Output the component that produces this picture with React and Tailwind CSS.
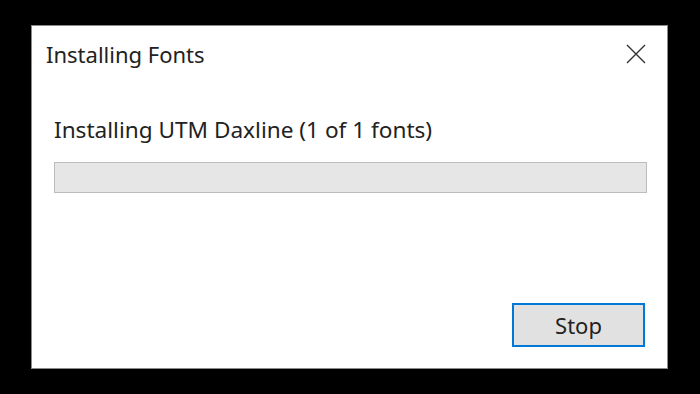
import React from "react";

const font = { fontFamily: '"Noto Sans", "Open Sans", sans-serif' };

const App = () => {
  return (
    <div className="w-[700px] h-[394px] bg-black pt-[25px] pl-[31px]" style={font}>
      {/* Dialog */}
      <div className="w-[637px] h-[344px] bg-white border border-[#8a8a8a] flex flex-col">
        {/* Title bar */}
        <div className="flex items-start justify-between pl-[14px] pr-[21px] pt-[13px] h-[89px]">
          <span className="text-[22px] leading-[30px] text-[#222222]">Installing Fonts</span>
          <svg width="20" height="20" viewBox="0 0 20 20" className="mt-[5px]">
            <path d="M1 1 L19 19 M19 1 L1 19" stroke="#333333" strokeWidth="1.4" fill="none" />
          </svg>
        </div>

        {/* Body */}
        <div className="pl-[22px] pr-[20px] flex flex-col">
          <span className="text-[22.6px] leading-[30px] text-[#222222]">
            Installing UTM Daxline (1 of 1 fonts)
          </span>
          <div className="mt-[17px] h-[31px] bg-[#e6e6e6] border border-[#bcbcbc]" />
        </div>

        {/* Footer */}
        <div className="flex-1 flex items-end justify-end pr-[22px] pb-[21px]">
          <button className="w-[133px] h-[44px] bg-[#e1e1e1] border-2 border-[#0078d7] text-[22px] leading-[30px] text-[#222222] flex items-center justify-center">
            Stop
          </button>
        </div>
      </div>
    </div>
  );
};

export default App;
